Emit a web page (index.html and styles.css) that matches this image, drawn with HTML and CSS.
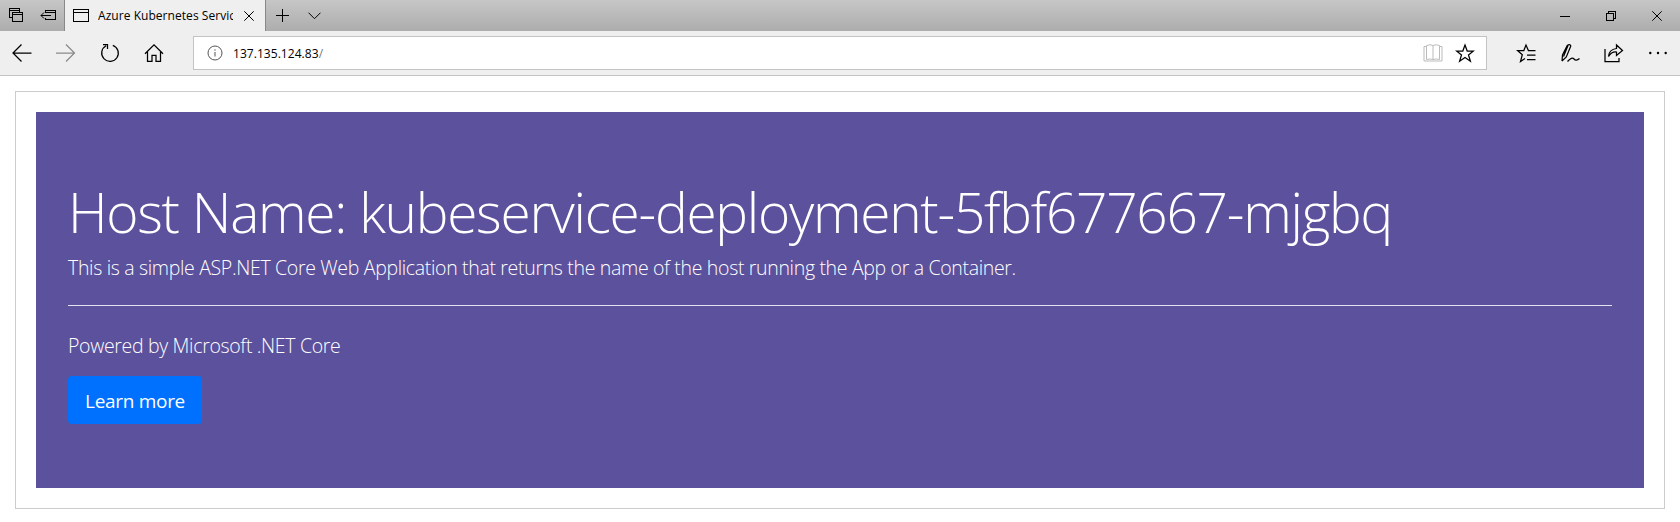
FILE: index.html
```html
<!DOCTYPE html>
<html lang="en">
<head>
<meta charset="utf-8">
<title>Azure Kubernetes Service</title>
<link rel="stylesheet" href="styles.css">
</head>
<body>
<header class="browser">
  <div class="tabbar">
    <div class="tab-tools">
      <svg class="icon crisp" width="15" height="15" viewBox="0 0 15 15"><path d="M3.500 9.500h-3v-9h10v3.500M0.500 2.500h10M3.500 4.500h10v9h-10zM3.500 6.500h10"/></svg>
      <svg class="icon" width="17" height="15" viewBox="0 0 17 15"><path class="crisp" d="M5.500 5v-2.500h10v9h-10v-2M5.500 4.500h10M1 7.500h10"/><path d="M4 4.500l-3 3 3 3"/></svg>
    </div>
    <div class="tab">
      <svg class="icon crisp" width="16" height="13" viewBox="0 0 16 13"><path d="M.5.500h15v12h-15zM.5 3.500h15"/></svg>
      <span class="tab-title">Azure Kubernetes Service</span>
      <svg class="icon" width="10" height="10" viewBox="0 0 10 10"><path d="M.3.3l9.400 9.400M9.700.3l-9.400 9.400"/></svg>
    </div>
    <div class="tab-actions">
      <svg class="icon crisp" width="13" height="13" viewBox="0 0 13 13"><path d="M6.500 0v13M0 6.500h13"/></svg>
      <svg class="icon" width="13" height="8" viewBox="0 0 13 8"><path d="M.5.700l6 6 6-6"/></svg>
    </div>
    <div class="window-controls">
      <svg class="icon crisp" width="10" height="10" viewBox="0 0 10 10"><path d="M0 5.500h10"/></svg>
      <svg class="icon crisp" width="10" height="10" viewBox="0 0 10 10"><path d="M.5 2.500h7v7h-7zM2.500 2v-1.500h7v7h-2"/></svg>
      <svg class="icon" width="10" height="10" viewBox="0 0 10 10"><path d="M.3.3l9.400 9.400M9.700.3l-9.400 9.400"/></svg>
    </div>
  </div>
  <div class="toolbar">
    <nav class="nav-buttons">
      <svg class="icon nav" width="20" height="20" viewBox="0 0 20 20"><path d="M9.500 1.500l-8.500 8.500 8.500 8.500M1 10h18.500"/></svg>
      <svg class="icon nav faded" width="20" height="20" viewBox="0 0 20 20"><path d="M10 1.500l8.500 8.500-8.500 8.500M18.500 10h-18.500"/></svg>
      <svg class="icon nav" width="20" height="20" viewBox="0 0 20 20"><path d="M12.800 2.300a8.300 8.300 0 1 1-6.700.5M3 1.500h4.500v4.500"/></svg>
      <svg class="icon nav" width="20" height="20" viewBox="0 0 20 20"><path d="M1 10.800l9-9 9 9M3.500 9v9.300h4.500v-6h4v6h4.500v-9.300"/></svg>
    </nav>
    <div class="address">
      <svg class="icon info" width="16" height="16" viewBox="0 0 16 16"><circle cx="8" cy="8" r="7"/><path d="M8 7v4.500M8 4.300v1.400"/></svg>
      <span class="url">137.135.124.83<span class="slash">/</span></span>
      <svg class="icon book" width="20" height="20" viewBox="0 0 20 20"><path d="M10 2.500q-3-1.500-6.500 0v14q3.500-1 6.500 0q3-1 6.500 0v-14q-3.500-1.500-6.500 0v14M3.500 3.500h-2.500v14.500h18v-14.500h-2.500"/></svg>
      <svg class="icon nav" width="20" height="20" viewBox="0 0 20 20"><path d="M10 2l2.200 6h6.300l-5 3.900 1.900 6.300-5.400-3.800-5.400 3.800 1.900-6.300-5-3.900h6.300z"/></svg>
    </div>
    <div class="page-tools">
      <svg class="icon nav" width="20" height="20" viewBox="0 0 20 20"><path d="M19.500 7.500h-7.100l-2.400-5.500-2.200 5.500h-6.300l4.800 4.200-1.800 6.800 4.500-3M11 12h8.500M11 16.500h8.500"/></svg>
      <svg class="icon nav" width="20" height="20" viewBox="0 0 20 20"><path d="M2 18l.5-6 4.800-9.500q2.500-2 3.500.5l-4.500 11-4.300 4M8 2.500l-4.500 11M7.500 18.500q4.500-5 6.500-2.500t5.500-.5"/></svg>
      <svg class="icon nav" width="20" height="20" viewBox="0 0 20 20"><path d="M1 6v12.500h14v-3.500M4.500 13.500q.5-7 8-8v-3.500l6 5.500-6 5v-3.500q-5-.5-8 4.500z"/></svg>
      <svg class="icon dots" width="20" height="20" viewBox="0 0 20 20"><circle cx="2.300" cy="10" r="1.200"/><circle cx="10" cy="10" r="1.200"/><circle cx="17.700" cy="10" r="1.200"/></svg>
    </div>
  </div>
</header>
<main class="container">
  <section class="jumbotron">
    <h1 class="display">Host Name: kubeservice-deployment-5fbf677667-mjgbq</h1>
    <p class="lead">This is a simple ASP.NET Core Web Application that returns the name of the host running the App or a Container.</p>
    <hr class="rule">
    <p class="lead powered">Powered by Microsoft .NET Core</p>
    <a class="button" href="#">Learn more</a>
  </section>
</main>
</body>
</html>
```
FILE: styles.css
```css
* { box-sizing: border-box; }
body { margin: 0; background: #fff; font-family: "Open Sans", "Noto Sans", sans-serif; color: #fff; }
.browser { color: #000; font-size: 12px; }
.icon { display: block; flex: none; fill: none; stroke: #000; stroke-width: 1; }
.crisp { shape-rendering: crispEdges; }
.tabbar { display: flex; height: 31px; background: linear-gradient(#c6c6c6, #adadad); }
.tab-tools { display: flex; align-items: center; gap: 16px; width: 65px; padding-left: 9px; border-right: 1px solid #888; }
.tab { display: flex; align-items: center; width: 201px; padding-left: 8px; background: #efefef; border-right: 1px solid #888; }
.tab-title { width: 135px; margin: 0 11px 0 9px; overflow: hidden; white-space: nowrap; line-height: 18px; letter-spacing: 0.05px; }
.tab-actions { display: flex; align-items: center; gap: 19px; padding-left: 10px; }
.window-controls { display: flex; align-items: center; gap: 36px; margin-left: auto; padding-right: 18px; }
.toolbar { display: flex; align-items: center; height: 45px; background: #efefef; border-bottom: 1px solid #c3c3c3; }
.nav { stroke-width: 1.25; }
.nav-buttons { display: flex; gap: 24px; width: 193px; padding-left: 12px; }
.faded { stroke: #8b8b8b; }
.address { display: flex; align-items: center; width: 1294px; height: 34px; padding: 0 11px 0 13px; background: #fff; border: 1px solid #c3c3c3; }
.info { stroke: #555; }
.url { flex: 1; margin-left: 10px; padding-top: 1px; line-height: 18px; letter-spacing: 0.05px; }
.slash { color: #777; }
.book { margin-right: 12px; stroke: #bbb; }
.page-tools { display: flex; gap: 24px; padding-left: 29px; }
.dots { fill: #000; stroke: none; }
.container { margin: 15px 15px 0; padding: 20px; border: 1px solid #ccc; height: 418px; }
.jumbotron { height: 376px; padding: 66px 32px 62px; background: #5c519c; white-space: nowrap; }
.display { margin: 0 0 8px; font-size: 55px; line-height: 67px; font-weight: 300; letter-spacing: -1.27px; }
.lead { margin: 0; font-size: 19.5px; line-height: 30px; font-weight: 300; letter-spacing: -0.33px; }
.rule { height: 1px; margin: 22px 0 25px; border: 0; background: #e4e2ee; }
.powered { margin-bottom: 15px; }
.button { display: inline-flex; align-items: center; justify-content: center; width: 134px; height: 48px; padding-top: 2px; border-radius: 4px; background: #0070ff; color: #fff; font-size: 19px; line-height: 30px; letter-spacing: -0.3px; text-decoration: none; }
```
